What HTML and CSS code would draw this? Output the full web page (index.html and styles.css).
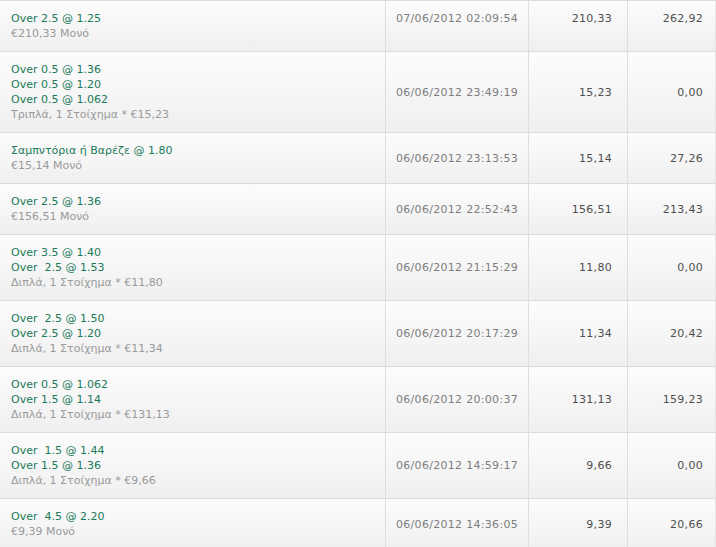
FILE: index.html
```html
<!DOCTYPE html>
<html lang="el">
<head>
<meta charset="utf-8">
<title>Στοιχήματα</title>
<link rel="stylesheet" href="styles.css">
</head>
<body>
<div class="bets">
  <div class="row row-top">
    <div class="cell sel"><div class="pick">Over 2.5 @ 1.25</div><div class="type">€210,33 Μονό</div></div>
    <div class="cell date">07/06/2012 02:09:54</div>
    <div class="cell num">210,33</div>
    <div class="cell num last">262,92</div>
  </div>
  <div class="row">
    <div class="cell sel"><div class="pick">Over 0.5 @ 1.36</div><div class="pick">Over 0.5 @ 1.20</div><div class="pick">Over 0.5 @ 1.062</div><div class="type">Τριπλά, 1 Στοίχημα * €15,23</div></div>
    <div class="cell date">06/06/2012 23:49:19</div>
    <div class="cell num">15,23</div>
    <div class="cell num last">0,00</div>
  </div>
  <div class="row">
    <div class="cell sel"><div class="pick">Σαμπντόρια ή Βαρέζε @ 1.80</div><div class="type">€15,14 Μονό</div></div>
    <div class="cell date">06/06/2012 23:13:53</div>
    <div class="cell num">15,14</div>
    <div class="cell num last">27,26</div>
  </div>
  <div class="row">
    <div class="cell sel"><div class="pick">Over 2.5 @ 1.36</div><div class="type">€156,51 Μονό</div></div>
    <div class="cell date">06/06/2012 22:52:43</div>
    <div class="cell num">156,51</div>
    <div class="cell num last">213,43</div>
  </div>
  <div class="row">
    <div class="cell sel"><div class="pick">Over 3.5 @ 1.40</div><div class="pick">Over&nbsp; 2.5 @ 1.53</div><div class="type">Διπλά, 1 Στοίχημα * €11,80</div></div>
    <div class="cell date">06/06/2012 21:15:29</div>
    <div class="cell num">11,80</div>
    <div class="cell num last">0,00</div>
  </div>
  <div class="row">
    <div class="cell sel"><div class="pick">Over&nbsp; 2.5 @ 1.50</div><div class="pick">Over 2.5 @ 1.20</div><div class="type">Διπλά, 1 Στοίχημα * €11,34</div></div>
    <div class="cell date">06/06/2012 20:17:29</div>
    <div class="cell num">11,34</div>
    <div class="cell num last">20,42</div>
  </div>
  <div class="row">
    <div class="cell sel"><div class="pick">Over 0.5 @ 1.062</div><div class="pick">Over 1.5 @ 1.14</div><div class="type">Διπλά, 1 Στοίχημα * €131,13</div></div>
    <div class="cell date">06/06/2012 20:00:37</div>
    <div class="cell num">131,13</div>
    <div class="cell num last">159,23</div>
  </div>
  <div class="row">
    <div class="cell sel"><div class="pick">Over&nbsp; 1.5 @ 1.44</div><div class="pick">Over 1.5 @ 1.36</div><div class="type">Διπλά, 1 Στοίχημα * €9,66</div></div>
    <div class="cell date">06/06/2012 14:59:17</div>
    <div class="cell num">9,66</div>
    <div class="cell num last">0,00</div>
  </div>
  <div class="row">
    <div class="cell sel"><div class="pick">Over&nbsp; 4.5 @ 2.20</div><div class="type">€9,39 Μονό</div></div>
    <div class="cell date">06/06/2012 14:36:05</div>
    <div class="cell num">9,39</div>
    <div class="cell num last">20,66</div>
  </div>
</div>
</body>
</html>
```

FILE: styles.css
```css
html, body {
  margin: 0;
  padding: 0;
  background: #ffffff;
}

body {
  font-family: "DejaVu Sans", Verdana, sans-serif;
  font-size: 11px;
}

.bets {
  width: 716px;
  overflow: hidden;
}

.row {
  display: grid;
  grid-template-columns: 385px 143px 99px 89px;
  border-top: 1px solid #dcdcdc;
  background: linear-gradient(to bottom, #fcfcfc 0%, #f6f6f6 50%, #efefef 100%);
}

.cell {
  line-height: 15px;
  box-sizing: border-box;
}

.sel {
  padding: 10px 11px 10px 11px;
}

.pick {
  color: #1b7a5a;
  white-space: pre;
}

.type {
  color: #9a9a9a;
}

.date,
.num {
  border-left: 1px solid #dedede;
  display: flex;
  align-items: center;
  letter-spacing: 0.3px;
}

.date {
  color: #7d7d7d;
  padding-left: 10px;
}

.num {
  color: #4f4f4f;
  justify-content: flex-end;
  padding-right: 15px;
}

.num.last {
  padding-right: 12px;
  border-right: 1px solid #e6e6e6;
}

.row-top .date,
.row-top .num {
  align-items: flex-start;
  padding-top: 10px;
}
```
